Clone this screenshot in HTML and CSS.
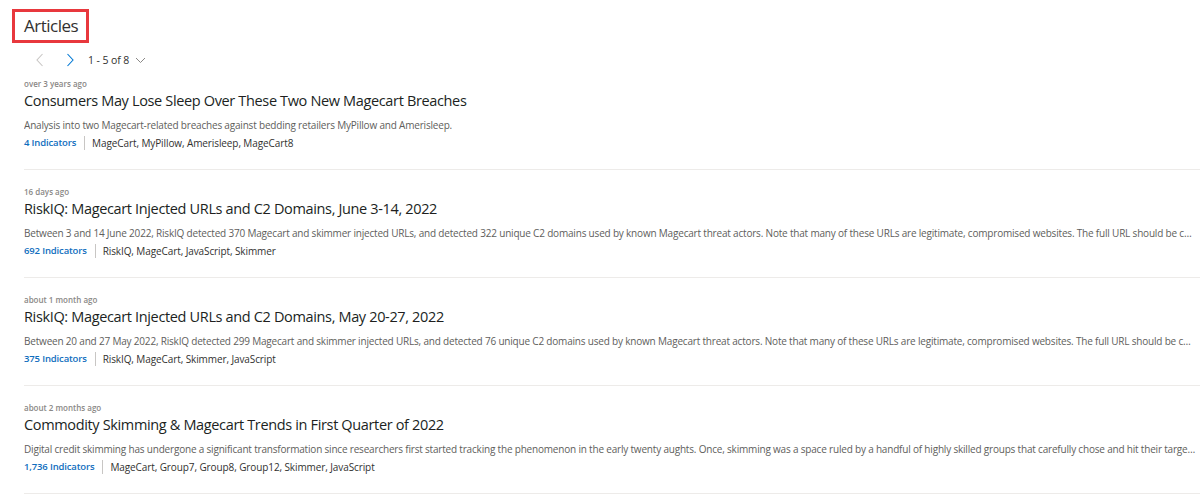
FILE: index.html
```html
<!DOCTYPE html>
<html lang="en">
<head>
<meta charset="utf-8">
<title>Articles</title>
<link rel="stylesheet" href="styles.css">
</head>
<body>
<div class="page">
  <div class="header"><h1 class="heading">Articles</h1></div>
  <div class="pager">
    <button class="nav nav-prev" aria-label="Previous">
      <svg width="10" height="14" viewBox="0 0 10 14"><path d="M7.5 1 L2 7 L7.5 13" fill="none" stroke="currentColor" stroke-width="1.1"/></svg>
    </button>
    <button class="nav nav-next" aria-label="Next">
      <svg width="10" height="14" viewBox="0 0 10 14"><path d="M2.5 1 L8 7 L2.5 13" fill="none" stroke="currentColor" stroke-width="1.1"/></svg>
    </button>
    <span class="range">1 - 5 of 8</span>
    <svg class="caret" width="11" height="7" viewBox="0 0 11 7"><path d="M1 1 L5.5 5.5 L10 1" fill="none" stroke="currentColor" stroke-width="1"/></svg>
  </div>
  <ul class="list">
    <li class="item">
      <div class="ago">over 3 years ago</div>
      <div class="title">Consumers May Lose Sleep Over These Two New Magecart Breaches</div>
      <div class="desc">Analysis into two Magecart-related breaches against bedding retailers MyPillow and Amerisleep.</div>
      <div class="meta"><a class="ind">4 Indicators</a><span class="tags">MageCart, MyPillow, Amerisleep, MageCart8</span></div>
    </li>
    <li class="item">
      <div class="ago">16 days ago</div>
      <div class="title">RiskIQ: Magecart Injected URLs and C2 Domains, June 3-14, 2022</div>
      <div class="desc">Between 3 and 14 June 2022, RiskIQ detected 370 Magecart and skimmer injected URLs, and detected 322 unique C2 domains used by known Magecart threat actors. Note that many of these URLs are legitimate, compromised websites. The full URL should be considered malicious.</div>
      <div class="meta"><a class="ind">692 Indicators</a><span class="tags">RiskIQ, MageCart, JavaScript, Skimmer</span></div>
    </li>
    <li class="item">
      <div class="ago">about 1 month ago</div>
      <div class="title">RiskIQ: Magecart Injected URLs and C2 Domains, May 20-27, 2022</div>
      <div class="desc">Between 20 and 27 May 2022, RiskIQ detected 299 Magecart and skimmer injected URLs, and detected 76 unique C2 domains used by known Magecart threat actors. Note that many of these URLs are legitimate, compromised websites. The full URL should be considered malicious.</div>
      <div class="meta"><a class="ind">375 Indicators</a><span class="tags">RiskIQ, MageCart, Skimmer, JavaScript</span></div>
    </li>
    <li class="item">
      <div class="ago">about 2 months ago</div>
      <div class="title">Commodity Skimming &amp; Magecart Trends in First Quarter of 2022</div>
      <div class="desc">Digital credit skimming has undergone a significant transformation since researchers first started tracking the phenomenon in the early twenty aughts. Once, skimming was a space ruled by a handful of highly skilled groups that carefully chose and hit their targets with precision.</div>
      <div class="meta"><a class="ind">1,736 Indicators</a><span class="tags">MageCart, Group7, Group8, Group12, Skimmer, JavaScript</span></div>
    </li>
  </ul>
</div>
</body>
</html>
```
FILE: styles.css
```css
* { box-sizing: border-box; }
html, body { margin: 0; padding: 0; background: #fff; }
body {
  font-family: "Open Sans", "Noto Sans", "Liberation Sans", sans-serif;
  color: #323130;
  overflow: hidden;
}
.page { padding: 9px 0 0 12px; }
.header { display: flex; }
.heading {
  margin: 0;
  border: 3px solid #e8383d;
  padding: 2px 8px 2px 9px;
  font-size: 17px;
  font-weight: 400;
  line-height: 24px;
  color: #323130;
  letter-spacing: -0.5px;
}
.pager {
  display: flex;
  align-items: center;
  height: 20px;
  margin-top: 7px;
  padding-left: 23px;
}
.nav {
  border: 0;
  background: none;
  padding: 0;
  width: 10px;
  height: 14px;
  display: flex;
  cursor: pointer;
}
.nav-prev { color: #c8c6c4; }
.nav-next { color: #0078d4; margin-left: 20px; }
.range { font-size: 10.5px; margin-left: 13px; color: #323130; letter-spacing: -0.1px; white-space: pre; }
.caret { color: #8a8886; margin-left: 6px; }
.list { list-style: none; margin: 0; padding: 5px 0 0 12px; }
.item {
  padding: 3px 0 19px 0;
  border-bottom: 1px solid #edebe9;
  margin-bottom: 13px;
}
.ago { font-size: 8px; font-weight: 600; color: #8a8886; line-height: 12px; }
.title {
  font-size: 14.5px;
  line-height: 22px;
  color: #201f1e;
  margin-top: 0;
  letter-spacing: -0.35px;
}
.desc {
  font-size: 10px;
  line-height: 14px;
  color: #605e5c;
  margin-top: 6px;
  white-space: nowrap;
  overflow: hidden;
  text-overflow: ellipsis;
  padding-right: 4px;
  letter-spacing: -0.19px;
}
.meta { display: flex; align-items: center; margin-top: 4px; font-size: 10px; line-height: 14px; }
.ind { color: #106ebe; font-weight: 600; font-size: 9.5px; letter-spacing: -0.15px; padding-right: 8px; border-right: 1px solid #c8c6c4; margin-right: 7px; }
.tags { color: #323130; letter-spacing: -0.1px; }
```
